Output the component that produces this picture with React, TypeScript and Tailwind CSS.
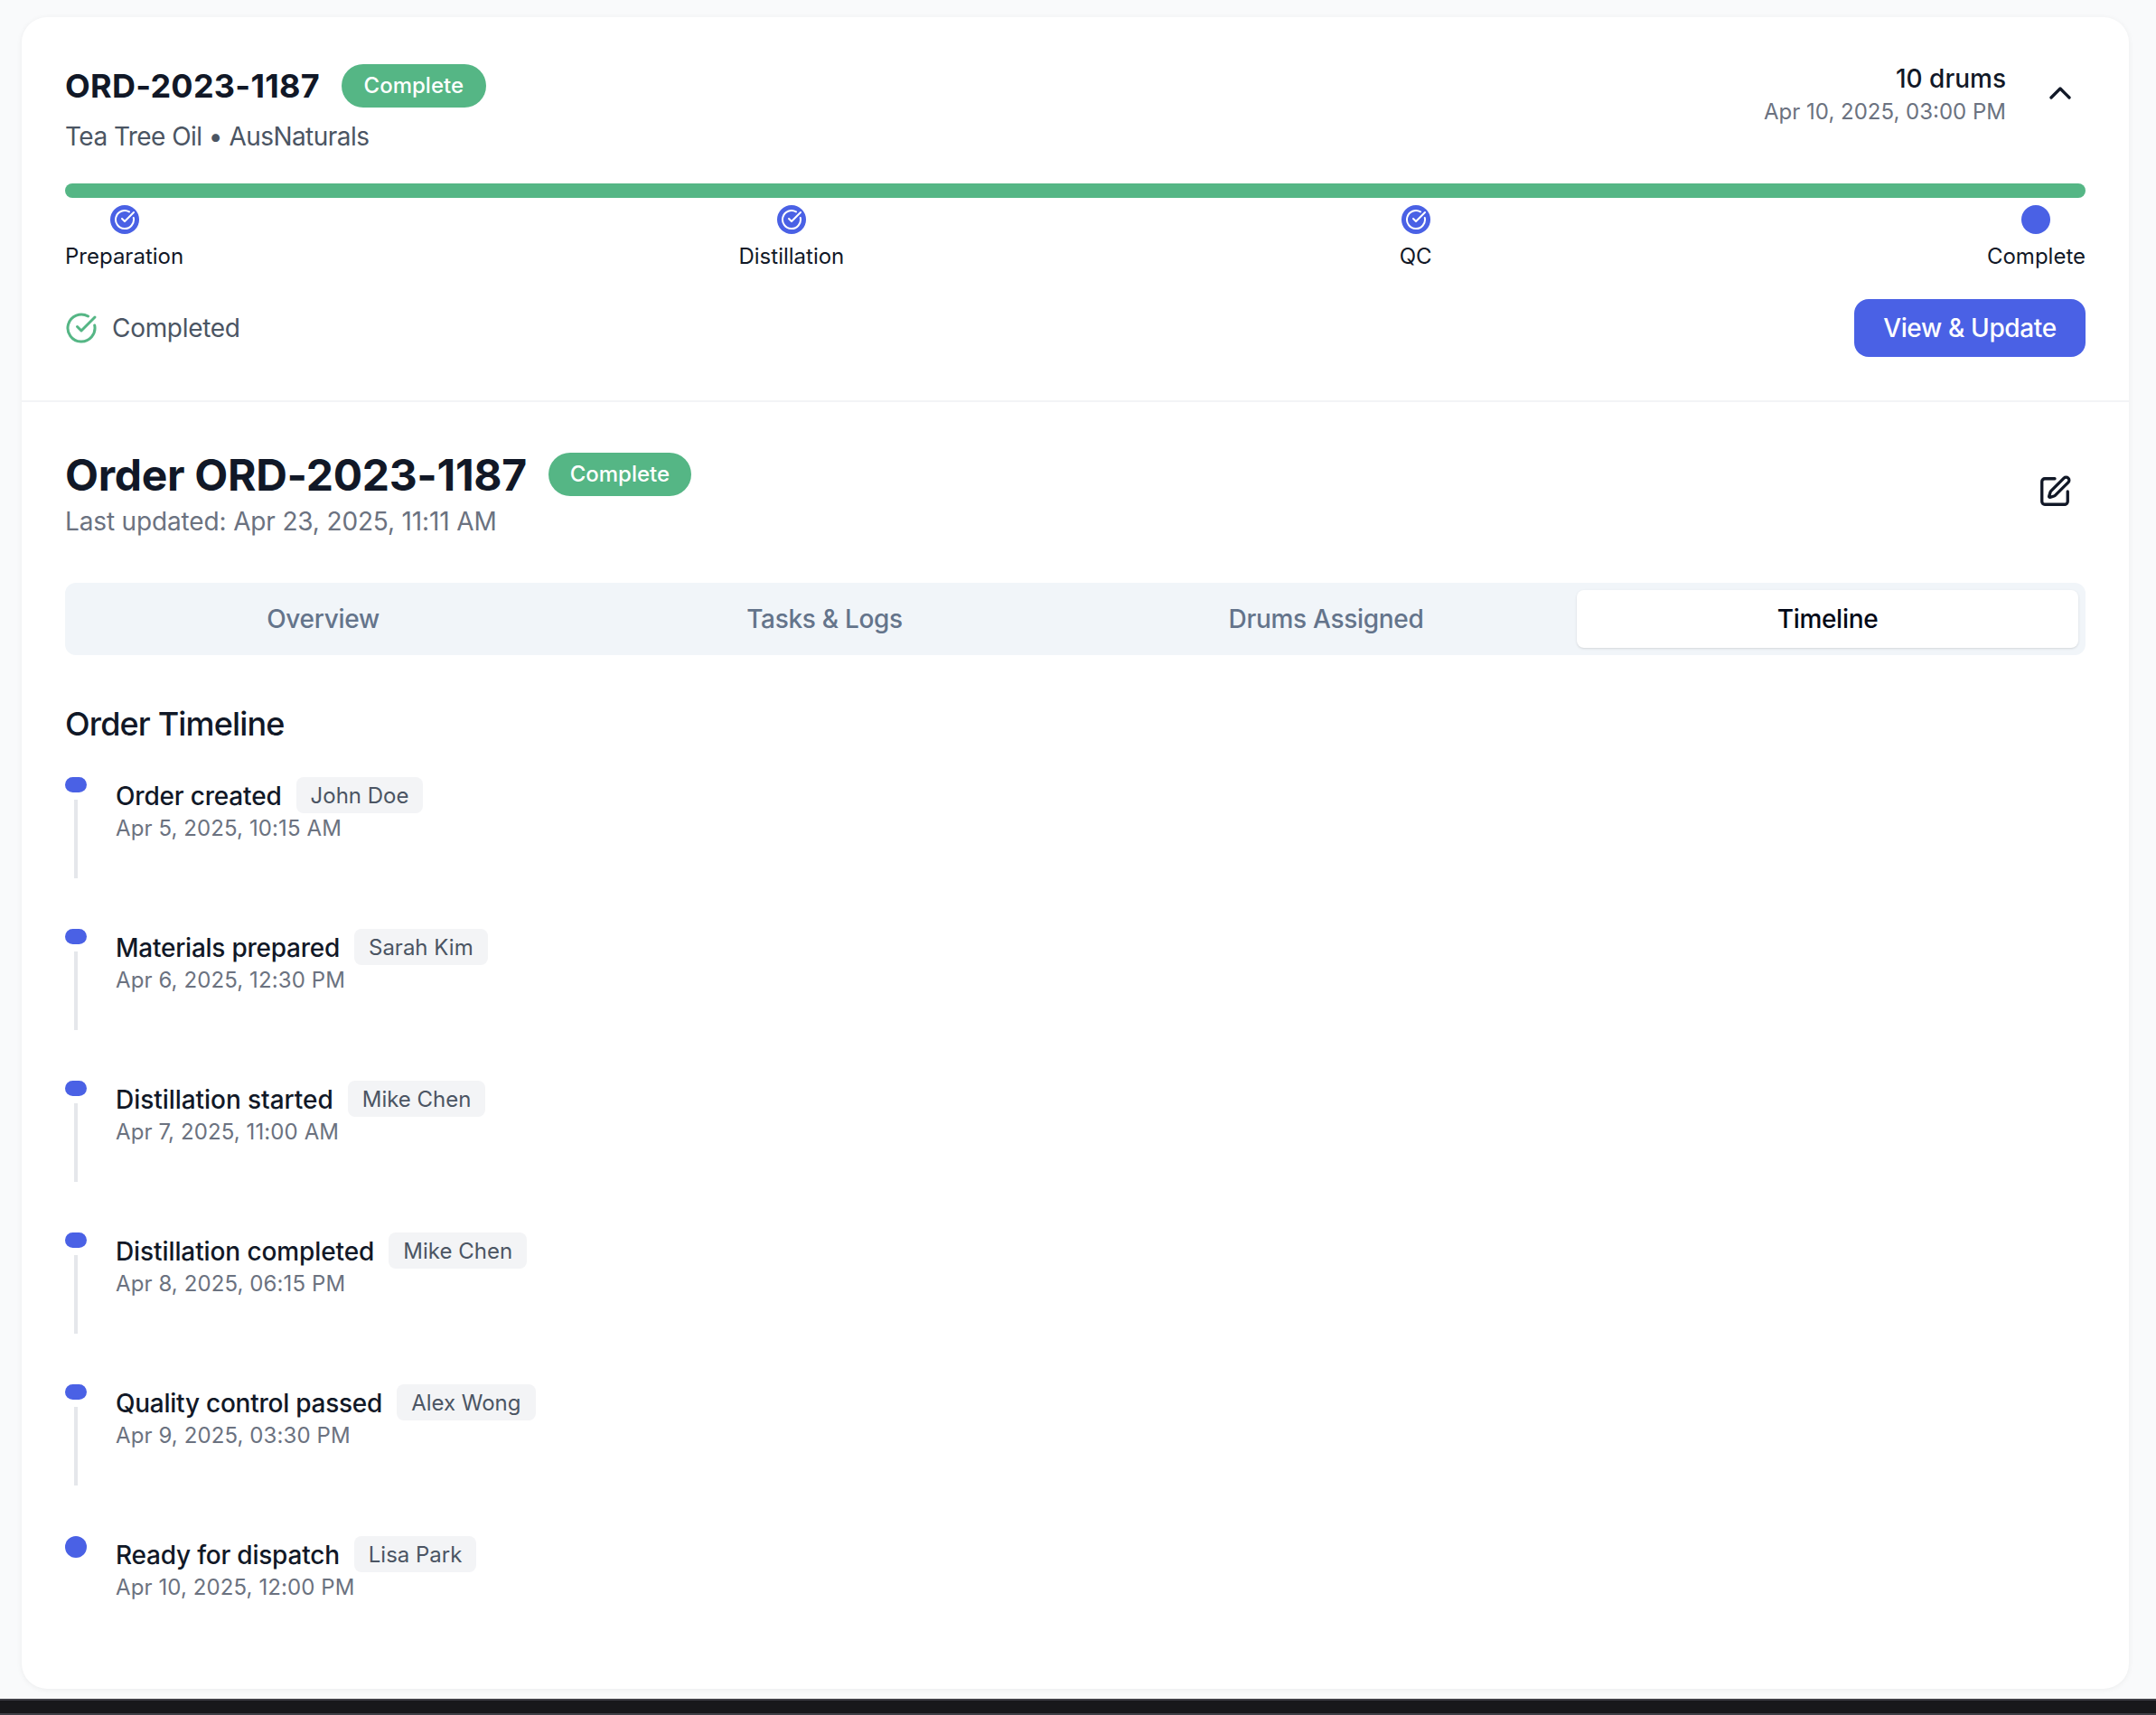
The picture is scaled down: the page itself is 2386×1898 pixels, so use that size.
import React from "react";
import { ChevronUp, CircleCheckBig, SquarePen } from "lucide-react";

const events = [
  ["Order created", "John Doe", "Apr 5, 2025, 10:15 AM", "tracking-[-0.18px]"],
  ["Materials prepared", "Sarah Kim", "Apr 6, 2025, 12:30 PM", "tracking-[-0.25px]"],
  ["Distillation started", "Mike Chen", "Apr 7, 2025, 11:00 AM", "tracking-[-0.05px]"],
  ["Distillation completed", "Mike Chen", "Apr 8, 2025, 06:15 PM", "tracking-[-0.1px]"],
  ["Quality control passed", "Alex Wong", "Apr 9, 2025, 03:30 PM", "tracking-[-0.25px]"],
  ["Ready for dispatch", "Lisa Park", "Apr 10, 2025, 12:00 PM", "tracking-[-0.22px]"],
];

const steps: [string, boolean][] = [
  ["Preparation", true],
  ["Distillation", true],
  ["QC", true],
  ["Complete", false],
];

const tabs = ["Overview", "Tasks & Logs", "Drums Assigned", "Timeline"];

function Badge({ wide }: { wide?: boolean }) {
  return (
    <span
      className={
        wide
          ? "flex h-12 w-40 items-center justify-center rounded-full bg-[#55b685] text-[24px] font-medium text-white"
          : "flex h-12 w-[158px] items-center justify-center rounded-full bg-[#55b685] text-[24px] font-medium text-white"
      }
    >
      Complete
    </span>
  );
}

export default function App() {
  return (
    <div className="flex h-screen flex-col bg-[#f9fafb] font-[Inter,sans-serif] text-[#111827]">
      <div className="flex min-h-0 flex-1 flex-col pt-[19px] pr-[30px] pb-[11px] pl-6">
        <div className="flex-1 rounded-[28px] bg-white shadow-[0_1px_6px_rgba(0,0,0,0.06)]">
          <section className="border-b-2 border-[#f3f4f6] px-12 pt-12 pb-12">
            <div className="flex justify-between">
              <div>
                <div className="flex h-14 items-center gap-6">
                  <h2 className="text-[36px] font-bold tracking-[0.25px]">ORD-2023-1187</h2>
                  <Badge wide />
                </div>
                <p className="mt-2 text-[28px] leading-10 tracking-[-0.55px] text-[#4b5563]">Tea Tree Oil • AusNaturals</p>
              </div>
              <div className="flex items-start gap-8">
                <div className="text-right">
                  <div className="text-[28px] leading-10 font-medium">10 drums</div>
                  <div className="mt-px text-[24px] leading-8 text-[#6b7280]">Apr 10, 2025, 03:00 PM</div>
                </div>
                <button className="mt-2 flex h-14 w-14 items-center justify-center text-[#111827]">
                  <ChevronUp size={40} strokeWidth={2} />
                </button>
              </div>
            </div>
            <div className="mt-8 h-4 rounded-full bg-[#55b685]" />
            <div className="mt-2 flex justify-between">
              {steps.map(([label, done]) => (
                <div key={label} className="flex flex-col items-center gap-[9px]">
                  <div className="flex h-8 w-8 items-center justify-center rounded-full bg-[#4a61e5] text-white">
                    {done && <CircleCheckBig size={24} strokeWidth={2} />}
                  </div>
                  <span className="text-[24px] leading-8">{label}</span>
                </div>
              ))}
            </div>
            <div className="mt-[31px] flex items-center justify-between">
              <div className="flex items-center gap-4 text-[28px] tracking-[-0.3px] text-[#4b5563]">
                <CircleCheckBig size={36} strokeWidth={2} className="text-[#55b685]" />
                Completed
              </div>
              <button className="h-16 w-64 rounded-2xl bg-[#4a61e5] text-[28px] font-medium tracking-[-0.35px] text-white">
                View &amp; Update
              </button>
            </div>
          </section>
          <section className="px-12 pt-12">
            <div className="flex items-start justify-between">
              <div>
                <div className="flex h-16 items-center gap-6">
                  <h1 className="mt-px text-[48px] font-bold tracking-[-0.3px]">Order ORD-2023-1187</h1>
                  <Badge />
                </div>
                <p className="text-[28px] leading-10 tracking-[-0.15px] text-[#6b7280]">Last updated: Apr 23, 2025, 11:11 AM</p>
              </div>
              <button className="mt-[31px] mr-[14px] flex h-10 w-10 items-center justify-center text-[#111827]">
                <SquarePen size={38} strokeWidth={2.1} />
              </button>
            </div>
            <div className="mt-12 grid h-20 grid-cols-4 rounded-xl bg-[#f1f5f9] p-2">
              {tabs.map((t) => (
                <div
                  key={t}
                  className={
                    t === "Timeline"
                      ? "flex items-center justify-center rounded-lg bg-white text-[28px] font-medium tracking-[-0.3px] text-[#020817] shadow-sm"
                      : "flex items-center justify-center text-[28px] font-medium tracking-[-0.3px] text-[#64748b]"
                  }
                >
                  {t}
                </div>
              ))}
            </div>
            <h3 className="mt-12 text-[36px] leading-14 font-medium tracking-[-0.85px]">Order Timeline</h3>
            <div className="mt-[31px] flex flex-col gap-14">
              {events.map(([title, who, date, track], i) => {
                const last = i === events.length - 1;
                return (
                  <div key={title} className={last ? "flex gap-8" : "flex h-28 gap-8"}>
                    <div className="flex w-6 flex-col">
                      <div className={last ? "h-6 w-6 rounded-full bg-[#4a61e5]" : "h-[17px] w-6 rounded-full bg-[#4a61e5]"} />
                      {!last && <div className="mt-2 w-1 flex-1 self-center bg-[#e5e7eb]" />}
                    </div>
                    <div>
                      <div className="flex h-10 items-center gap-4">
                        <span className={`pt-[2px] text-[28px] font-medium ${track}`}>{title}</span>
                        <span className="flex h-10 items-center rounded-lg bg-[#f3f4f6] px-4 pt-[2px] text-[24px] text-[#4b5563]">{who}</span>
                      </div>
                      <div className="mt-px text-[24px] leading-8 tracking-[0.1px] text-[#6b7280]">{date}</div>
                    </div>
                  </div>
                );
              })}
            </div>
          </section>
        </div>
      </div>
      <div className="h-[18px] shrink-0 border-t-2 border-b-2 border-t-[#3f3f46] border-b-[#3f3f46] bg-[#18181b]" />
    </div>
  );
}
